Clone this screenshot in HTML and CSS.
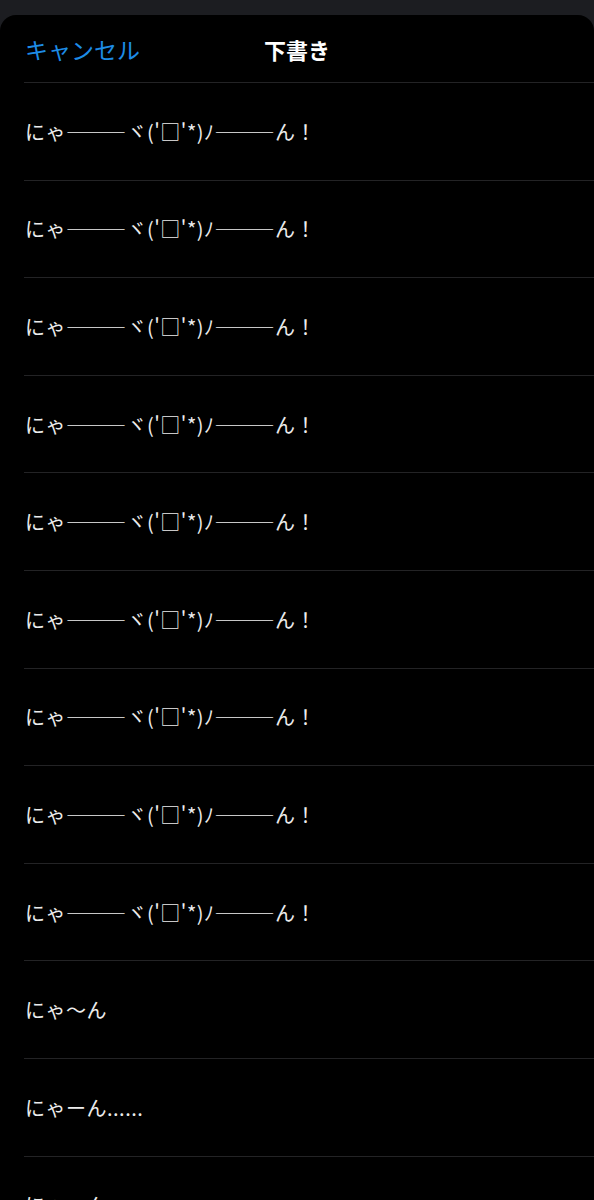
FILE: index.html
```html
<!DOCTYPE html>
<html lang="ja">
<head>
  <meta charset="UTF-8" />
  <meta name="viewport" content="width=device-width, initial-scale=1.0" />
  <title>下書き</title>
  <link rel="stylesheet" href="styles.css">
</head>
<body>

  <!-- Sheet -->
  <div class="sheet">
    <header class="sheet-header">
      <a class="cancel" href="#">キャンセル</a>
      <h1 class="title">下書き</h1>
    </header>

    <!-- Drafts list -->
    <ul class="drafts">
      <li>にゃ―――ヾ('□'*)ﾉ―――ん！</li>
      <li>にゃ―――ヾ('□'*)ﾉ―――ん！</li>
      <li>にゃ―――ヾ('□'*)ﾉ―――ん！</li>
      <li>にゃ―――ヾ('□'*)ﾉ―――ん！</li>
      <li>にゃ―――ヾ('□'*)ﾉ―――ん！</li>
      <li>にゃ―――ヾ('□'*)ﾉ―――ん！</li>
      <li>にゃ―――ヾ('□'*)ﾉ―――ん！</li>
      <li>にゃ―――ヾ('□'*)ﾉ―――ん！</li>
      <li>にゃ―――ヾ('□'*)ﾉ―――ん！</li>
      <li>にゃ〜ん</li>
      <li>にゃーん......</li>
      <li>にゃーん</li>
    </ul>
  </div>

</body>
</html>
```

FILE: styles.css
```css
* {
  margin: 0;
  padding: 0;
  box-sizing: border-box;
  font-family: 'Noto Sans CJK JP', 'Noto Sans', sans-serif;
}
body {
  background-color: #1c1d21;
  color: #ececec;
  padding-top: 15px;
  overflow: hidden;
}
.sheet {
  background-color: #000;
  border-radius: 16px 16px 0 0;
  min-height: 1185px;
}
.sheet-header {
  position: relative;
  height: 68px;
  display: flex;
  align-items: center;
  justify-content: center;
  margin-left: 24px;
  border-bottom: 1px solid #232325;
}
.cancel {
  position: absolute;
  left: 1px;
  top: 19px;
  color: #1d8ce6;
  font-size: 23px;
  line-height: 30px;
  text-decoration: none;
}
.title {
  margin-left: -24px;
  font-size: 22px;
  font-weight: 700;
  line-height: 30px;
  color: #fff;
}
.drafts {
  list-style: none;
  margin-left: 24px;
}
.drafts li {
  height: 97.6px;
  display: flex;
  align-items: center;
  padding-left: 1px;
  font-size: 20px;
  letter-spacing: 0.5px;
  border-bottom: 1px solid #232325;
  white-space: nowrap;
}
```
